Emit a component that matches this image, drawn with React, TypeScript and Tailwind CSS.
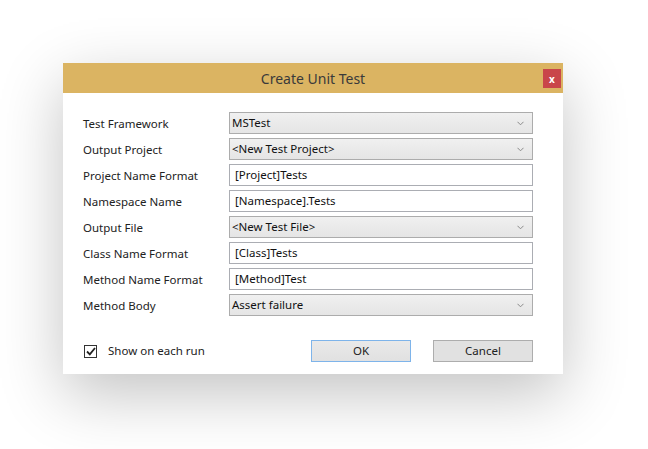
import React from 'react';

type Field = {
  label: string;
  value: string;
  kind: 'select' | 'text';
};

const fields: Field[] = [
  { label: 'Test Framework', value: 'MSTest', kind: 'select' },
  { label: 'Output Project', value: '<New Test Project>', kind: 'select' },
  { label: 'Project Name Format', value: '[Project]Tests', kind: 'text' },
  { label: 'Namespace Name', value: '[Namespace].Tests', kind: 'text' },
  { label: 'Output File', value: '<New Test File>', kind: 'select' },
  { label: 'Class Name Format', value: '[Class]Tests', kind: 'text' },
  { label: 'Method Name Format', value: '[Method]Test', kind: 'text' },
  { label: 'Method Body', value: 'Assert failure', kind: 'select' },
];

const Chevron = () => (
  <svg width="7" height="5" viewBox="0 0 7 5" className="shrink-0">
    <polyline points="0.5,0.8 3.5,3.8 6.5,0.8" fill="none" stroke="#8a8a8a" strokeWidth="1" />
  </svg>
);

const FieldBox = ({ field }: { field: Field }) =>
  field.kind === 'select' ? (
    <div className="flex h-[22px] items-center justify-between border border-[#acacac] bg-gradient-to-b from-[#f0f0f0] to-[#e5e5e5] pl-[2px] pr-[8px] text-[#111]">
      <span>{field.value}</span>
      <Chevron />
    </div>
  ) : (
    <div className="flex h-[22px] items-center border border-[#abadb3] bg-white px-[5px] text-[#111]">
      {field.value}
    </div>
  );

export default function App() {
  return (
    <div
      className="h-[449px] w-[648px] overflow-hidden bg-white pl-[63px] pt-[63px]"
      style={{ fontFamily: '"Noto Sans", "Open Sans", sans-serif' }}
    >
      <div className="w-[500px] bg-white text-[11.5px] shadow-[0_20px_60px_rgba(0,0,0,0.24)]">
        <div className="relative flex h-[30px] items-center justify-center bg-[#dbb462]">
          <span className="text-[14px] text-[#3a3a3a]">Create Unit Test</span>
          <div className="absolute right-[2px] top-[6px] flex h-[19px] w-[18px] items-center justify-center bg-[#c9464a] text-[10px] font-bold leading-none text-white">
            x
          </div>
        </div>

        <div className="pb-[12px] pl-[20px] pr-[30px] pt-[19px]">
          <div className="grid grid-cols-[146px_304px] gap-y-[4px]">
            {fields.map(f => (
              <React.Fragment key={f.label}>
                <div className="flex items-center pt-[2px] text-[#222]">{f.label}</div>
                <FieldBox field={f} />
              </React.Fragment>
            ))}
          </div>

          <div className="mt-[24px] flex items-center">
            <div className="flex flex-1 items-center gap-[11px] pl-[1px]">
              <div className="flex h-[13px] w-[13px] items-center justify-center border border-[#333] bg-white">
                <svg width="10" height="9" viewBox="0 0 10 9">
                  <polyline points="1,4.5 3.8,7.3 9,1" fill="none" stroke="#222" strokeWidth="1.8" />
                </svg>
              </div>
              <span className="text-[#222]">Show on each run</span>
            </div>
            <div className="flex h-[22px] w-[100px] items-center justify-center border border-[#7eb4ea] bg-gradient-to-b from-[#e9e9e9] to-[#e1e1e1] text-[#222]">
              OK
            </div>
            <div className="ml-[22px] flex h-[22px] w-[100px] items-center justify-center border border-[#adadad] bg-[#e1e1e1] text-[#222]">
              Cancel
            </div>
          </div>
        </div>
      </div>
    </div>
  );
}
